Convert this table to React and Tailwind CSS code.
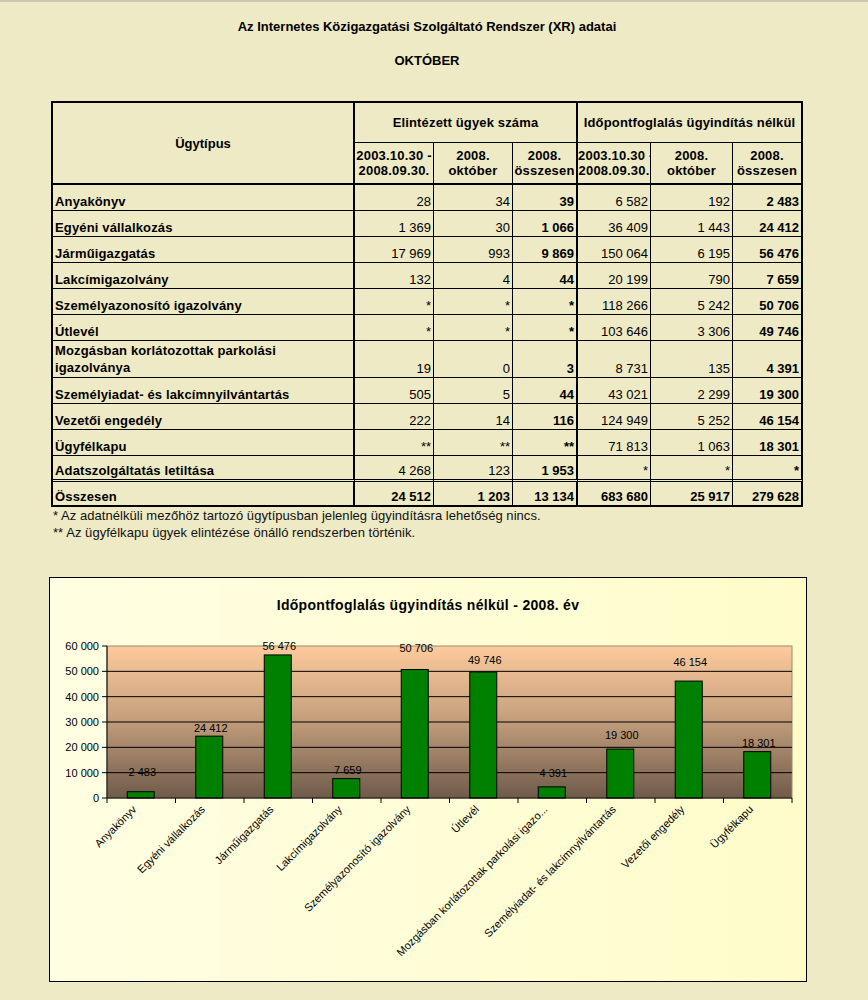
const rows = [
  ['Anyakönyv', '28', '34', '39', '6 582', '192', '2 483'],
  ['Egyéni vállalkozás', '1 369', '30', '1 066', '36 409', '1 443', '24 412'],
  ['Járműigazgatás', '17 969', '993', '9 869', '150 064', '6 195', '56 476'],
  ['Lakcímigazolvány', '132', '4', '44', '20 199', '790', '7 659'],
  ['Személyazonosító igazolvány', '*', '*', '*', '118 266', '5 242', '50 706'],
  ['Útlevél', '*', '*', '*', '103 646', '3 306', '49 746'],
  ['Mozgásban korlátozottak parkolási igazolványa', '19', '0', '3', '8 731', '135', '4 391'],
  ['Személyiadat- és lakcímnyilvántartás', '505', '5', '44', '43 021', '2 299', '19 300'],
  ['Vezetői engedély', '222', '14', '116', '124 949', '5 252', '46 154'],
  ['Ügyfélkapu', '**', '**', '**', '71 813', '1 063', '18 301'],
  ['Adatszolgáltatás letiltása', '4 268', '123', '1 953', '*', '*', '*'],
];
const total = ['Összesen', '24 512', '1 203', '13 134', '683 680', '25 917', '279 628'];

const colRight = ['border-r-2', 'border-r', 'border-r', 'border-r-2', 'border-r', 'border-r', 'border-r-2'];
const boldCol = [true, false, false, true, false, false, true];

// chart data: value, label centre y (svg coords)
const bars = [
  { name: 'Anyakönyv', v: 2483, ly: 194 },
  { name: 'Egyéni vállalkozás', v: 24412, ly: 150 },
  { name: 'Járműigazgatás', v: 56476, ly: 68 },
  { name: 'Lakcímigazolvány', v: 7659, ly: 192 },
  { name: 'Személyazonosító igazolvány', v: 50706, ly: 70 },
  { name: 'Útlevél', v: 49746, ly: 82 },
  { name: 'Mozgásban korlátozottak parkolási igazo...', v: 4391, ly: 195 },
  { name: 'Személyiadat- és lakcímnyilvántartás', v: 19300, ly: 157 },
  { name: 'Vezetői engedély', v: 46154, ly: 84 },
  { name: 'Ügyfélkapu', v: 18301, ly: 165 },
];

const fmt = (n) => n.toString().replace(/\B(?=(\d{3})+(?!\d))/g, ' ');

function Chart() {
  const x0 = 57, x1 = 742, y0 = 68, y1 = 220;
  const step = (x1 - x0) / bars.length;
  const h = y1 - y0;
  const ticks = [0, 10000, 20000, 30000, 40000, 50000, 60000];
  return (
    <svg width="756" height="403" className="block" style={{ fontFamily: '"Liberation Sans", Arial, sans-serif' }}>
      <defs>
        <linearGradient id="plotbg" x1="0" y1="0" x2="0" y2="1">
          <stop offset="0" stopColor="#fdca9c" />
          <stop offset="0.45" stopColor="#c8a27f" />
          <stop offset="1" stopColor="#6f5b4a" />
        </linearGradient>
      </defs>
      <text x="378" y="32" textAnchor="middle" fontSize="14" fontWeight="bold" letterSpacing="0.3" fill="#000">
        Időpontfoglalás ügyindítás nélkül - 2008. év
      </text>
      <rect x={x0} y={y0} width={x1 - x0} height={h} fill="url(#plotbg)" stroke="#9a8a70" strokeWidth="1" />
      {ticks.map((t) => {
        const y = y1 - (t / 60000) * h;
        return (
          <g key={t}>
            {t > 0 && t < 60000 && <line x1={x0} x2={x1} y1={y} y2={y} stroke="#000" strokeWidth="1" />}
            <line x1={x0 - 5} x2={x0} y1={y} y2={y} stroke="#000" strokeWidth="1" />
            <text x="49" y={y + 4} textAnchor="end" fontSize="11" fill="#000">{fmt(t)}</text>
          </g>
        );
      })}
      {bars.map((b, i) => {
        const cx = x0 + step * (i + 0.5);
        const bh = (b.v / 60000) * h;
        return (
          <g key={b.name}>
            <rect x={cx - 14} y={y1 - bh} width="27" height={bh} fill="#008000" stroke="#000" strokeWidth="1" />
            <text x={cx + 1} y={b.ly + 4} textAnchor="middle" fontSize="11" fill="#000">{fmt(b.v)}</text>
            <text transform={`translate(${cx - 4} ${y1 + 12}) rotate(-45)`} textAnchor="end" fontSize="11" fill="#000">{b.name}</text>
          </g>
        );
      })}
      <line x1={x0} x2={x0} y1={y0} y2={y1} stroke="#000" strokeWidth="1" />
      <line x1={x0} x2={x1} y1={y1} y2={y1} stroke="#000" strokeWidth="1" />
      {bars.map((b, i) => (
        <line key={i} x1={x0 + step * i} x2={x0 + step * i} y1={y1} y2={y1 + 5} stroke="#000" strokeWidth="1" />
      ))}
      <line x1={x1} x2={x1} y1={y1} y2={y1 + 5} stroke="#000" strokeWidth="1" />
    </svg>
  );
}

export default function App() {
  return (
    <div className="min-h-[1000px] w-[868px] bg-[#eeeac5] border-t-2 border-[#cbc6ae] text-black font-['Liberation_Sans',Arial,sans-serif] overflow-hidden">
      <div className="ml-[51px] w-[752px] pt-[17px]">
        <h1 className="text-center text-[13px] font-bold leading-[15px]">
          Az Internetes Közigazgatási Szolgáltató Rendszer (XR) adatai
        </h1>
        <h2 className="mt-[19px] text-center text-[13px] font-bold leading-[15px]">OKTÓBER</h2>

        <table className="mt-[33px] w-[752px] table-fixed border-separate border-spacing-0 border-l-2 border-t-2 border-black text-[13px] leading-[15px]">
          <colgroup>
            <col className="w-[302px]" />
            <col className="w-[79px]" />
            <col className="w-[79px]" />
            <col className="w-[65px]" />
            <col className="w-[73px]" />
            <col className="w-[82px]" />
            <col className="w-[70px]" />
          </colgroup>
          <thead>
            <tr>
              <th rowSpan={2} className="border-r-2 border-b-2 border-black align-middle font-bold">Ügytípus</th>
              <th colSpan={3} className="h-[40px] border-r-2 border-b border-black align-middle font-bold whitespace-nowrap tracking-[0.15px]">Elintézett ügyek száma</th>
              <th colSpan={3} className="h-[40px] border-r-2 border-b border-black align-middle font-bold whitespace-nowrap tracking-[0.15px]">Időpontfoglalás ügyindítás nélkül</th>
            </tr>
            <tr>
              {['2003.10.30 -|2008.09.30.', '2008.|október', '2008.|összesen', '2003.10.30 -|2008.09.30.', '2008.|október', '2008.|összesen'].map((t, i) => (
                <th key={i} className={`h-[42px] ${colRight[i + 1]} border-b-2 border-black align-middle font-bold whitespace-nowrap overflow-hidden tracking-[0.2px]`}>
                  {t.split('|').map((l) => <div key={l}>{l}</div>)}
                </th>
              ))}
            </tr>
          </thead>
          <tbody>
            {rows.map((r, ri) => {
              const last = ri === rows.length - 1;
              const tall = ri === 6;
              return (
                <tr key={ri}>
                  {r.map((c, ci) => (
                    <td
                      key={ci}
                      className={`${tall ? 'h-[37px]' : 'h-[26px]'} ${colRight[ci]} ${last ? 'border-b-[3px] border-double' : 'border-b'} border-black align-bottom pb-[1px] ${ci === 0 ? 'pl-[2px] text-left font-bold tracking-[0.15px]' : 'pr-[2px] text-right whitespace-nowrap'} ${ci > 0 && boldCol[ci] ? 'font-bold' : ''} ${tall && ci === 0 ? 'leading-[17px]' : ''}`}
                    >
                      {c}
                    </td>
                  ))}
                </tr>
              );
            })}
            <tr>
              {total.map((c, ci) => (
                <td
                  key={ci}
                  className={`h-[25px] ${colRight[ci]} border-b-2 border-black align-bottom pb-[1px] font-bold ${ci === 0 ? 'pl-[2px] text-left tracking-[0.15px]' : 'pr-[2px] text-right whitespace-nowrap'}`}
                >
                  {c}
                </td>
              ))}
            </tr>
          </tbody>
        </table>

        <div className="pl-[2px] text-[13px] leading-[17px] tracking-[0.05px] text-[#111]">
          <p>* Az adatnélküli mezőhöz tartozó ügytípusban jelenleg ügyindításra lehetőség nincs.</p>
          <p>** Az ügyfélkapu ügyek elintézése önálló rendszerben történik.</p>
        </div>
      </div>

      <div className="ml-[49px] mt-[36px] w-[758px] h-[405px] border border-black bg-linear-to-r from-[#fffee2] to-[#fffcca]">
        <Chart />
      </div>
    </div>
  );
}
